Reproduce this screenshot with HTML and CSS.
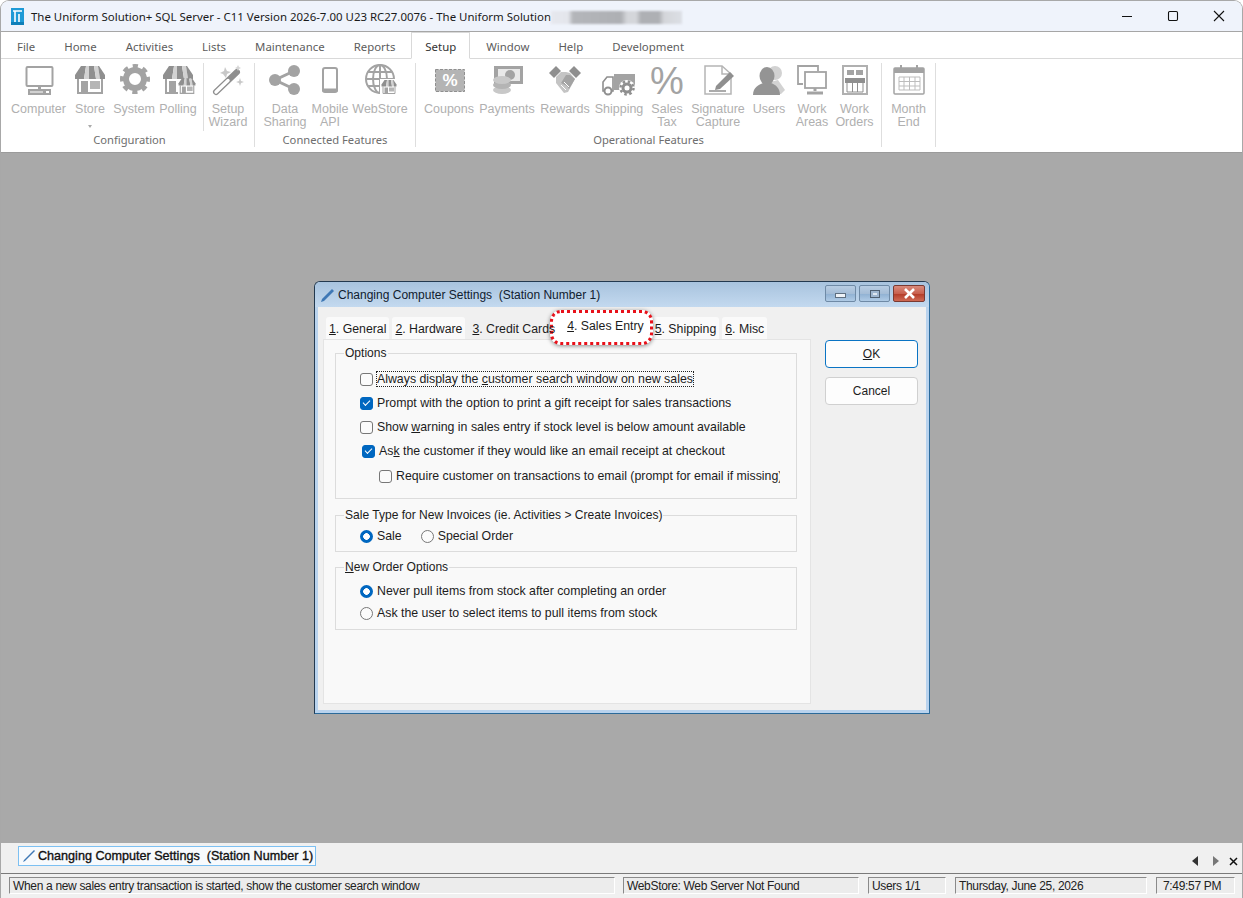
FILE: index.html
```html
<!DOCTYPE html>
<html lang="en">
<head>
    <meta charset="UTF-8">
    <title>The Uniform Solution+ SQL Server</title>
    <link rel="stylesheet" href="styles.css">
</head>
<body>
    <svg class="defs" width="0" height="0">
        <symbol id="store" viewBox="0 0 32 32">
            <path d="M4 15V29H28V15" fill="#fff" stroke="#a3a3a3" stroke-width="2"/>
            <rect x="7" y="17" width="7" height="12" fill="#a3a3a3"/>
            <rect x="16" y="17" width="10" height="8" fill="#b5b5b5"/>
            <path d="M7 2H12L10 15H1V11Z" fill="#8f8f8f"/>
            <path d="M12 2H15V15H10Z" fill="#d2d2d2"/>
            <path d="M15 2H20L22 15H15Z" fill="#8f8f8f"/>
            <path d="M20 2H24L26 15H22Z" fill="#d2d2d2"/>
            <path d="M24 2H25L31 11V15H26Z" fill="#8f8f8f"/>
        </symbol>
    </svg>

    <div class="app">
        <header class="titlebar">
            <svg class="logo" width="13" height="17" viewBox="0 0 13 17">
                <rect width="13" height="17" fill="#1e9ad6"/>
                <path d="M2 3H11M4 3V14M8 6V14" fill="none" stroke="#fff" stroke-width="1.6"/>
                <rect y="14" width="13" height="3" fill="#0f7fb8"/>
            </svg>
            <span class="title-text">The Uniform Solution+ SQL Server - C11 Version 2026-7.00 U23 RC27.0076 - The Uniform Solution</span>
            <span class="title-blur"></span>
            <div class="win-controls">
                <svg width="12" height="12" viewBox="0 0 12 12"><path d="M1 6.5H11" stroke="#111" stroke-width="1.1"/></svg>
                <svg width="12" height="12" viewBox="0 0 12 12"><rect x="1.5" y="1.5" width="9" height="9" rx="1.2" fill="none" stroke="#111" stroke-width="1.1"/></svg>
                <svg width="12" height="12" viewBox="0 0 12 12"><path d="M1 1L11 11M11 1L1 11" stroke="#111" stroke-width="1.1"/></svg>
            </div>
        </header>

        <nav class="menu">
            <span>File</span>
            <span>Home</span>
            <span>Activities</span>
            <span>Lists</span>
            <span>Maintenance</span>
            <span>Reports</span>
            <span class="menu-active">Setup</span>
            <span>Window</span>
            <span>Help</span>
            <span>Development</span>
        </nav>

        <section class="ribbon">
            <div class="group group-config">
                <div class="group-items">
                    <div class="tool">
                        <svg class="icon" viewBox="0 0 32 32">
                            <rect x="3.5" y="3" width="26" height="19" rx="1" fill="none" stroke="#a3a3a3" stroke-width="2"/>
                            <path d="M16.5 22V26" stroke="#a3a3a3" stroke-width="3"/>
                            <rect x="5" y="25" width="23" height="6" fill="#a3a3a3"/>
                            <path d="M7 28H20" stroke="#fff"/>
                            <rect x="23" y="27" width="3" height="2" fill="#fff"/>
                        </svg>
                        <span>Computer</span>
                    </div>
                    <div class="tool">
                        <svg class="icon" viewBox="0 0 32 32"><use href="#store"/></svg>
                        <span>Store</span>
                        <i class="caret"></i>
                    </div>
                    <div class="tool">
                        <svg class="icon" viewBox="0 0 32 32">
                            <circle cx="17" cy="15" r="9" fill="none" stroke="#a3a3a3" stroke-width="6"/>
                            <circle cx="17" cy="15" r="13" fill="none" stroke="#a3a3a3" stroke-width="4" stroke-dasharray="5.2 5" stroke-dashoffset="2.6"/>
                        </svg>
                        <span>System</span>
                    </div>
                    <div class="tool">
                        <svg class="icon" viewBox="0 0 32 32">
                            <use href="#store"/>
                            <rect x="16" y="15" width="17" height="17" fill="#fff"/>
                            <use href="#store" x="16" y="13" width="18" height="18"/>
                        </svg>
                        <span>Polling</span>
                    </div>
                    <div class="tool tool-split">
                        <svg class="icon" viewBox="0 0 32 32">
                            <path d="M4 28L25 8" stroke="#8f8f8f" stroke-width="6" stroke-linecap="round"/>
                            <path d="M4 28L16 16.5" stroke="#fff" stroke-width="3.4" stroke-linecap="round"/>
                            <path d="M13 3L15 7L19 8L15 10L14 14L11 10L8 9L12 7Z" fill="#c8c8c8"/>
                            <path d="M28 14L29 17L32 18L29 19L28 22L27 19L24 18L27 17Z" fill="#c8c8c8"/>
                            <path d="M26 1L27 3L29 4L27 5L26 7L25 5L23 4L25 3Z" fill="#d5d5d5"/>
                        </svg>
                        <span>Setup<br>Wizard</span>
                    </div>
                </div>
                <div class="group-name">Configuration</div>
            </div>

            <div class="group group-connected">
                <div class="group-items">
                    <div class="tool">
                        <svg class="icon" viewBox="0 0 32 32">
                            <path d="M25 7L6 16L25 25" fill="none" stroke="#a3a3a3" stroke-width="3"/>
                            <circle cx="25" cy="7" r="6" fill="#a3a3a3"/>
                            <circle cx="6" cy="16" r="6" fill="#a3a3a3"/>
                            <circle cx="25" cy="25" r="6" fill="#a3a3a3"/>
                        </svg>
                        <span>Data<br>Sharing</span>
                    </div>
                    <div class="tool">
                        <svg class="icon" viewBox="0 0 32 32">
                            <rect x="9" y="4" width="14" height="24" rx="2" fill="none" stroke="#a3a3a3" stroke-width="2"/>
                            <path d="M8 26H24" stroke="#a3a3a3" stroke-width="3"/>
                        </svg>
                        <span>Mobile<br>API</span>
                    </div>
                    <div class="tool">
                        <svg class="icon" viewBox="0 0 32 32" fill="none" stroke="#a3a3a3" stroke-width="2">
                            <circle cx="16" cy="15" r="14"/>
                            <ellipse cx="16" cy="15" rx="7" ry="14"/>
                            <path d="M2 15H30M4 8H28M4 22H28M16 1V29"/>
                            <rect x="16" y="15" width="17" height="17" fill="#fff" stroke="none"/>
                            <use href="#store" x="17" y="15" width="16" height="16" stroke="none"/>
                        </svg>
                        <span>WebStore</span>
                    </div>
                </div>
                <div class="group-name">Connected Features</div>
            </div>

            <div class="group group-operational">
                <div class="group-items">
                    <div class="tool">
                        <svg class="icon" viewBox="0 0 32 32">
                            <rect x="2.5" y="5.5" width="29" height="22" fill="#b4b4b4" stroke="#8f8f8f" stroke-dasharray="3 1.5"/>
                            <text x="17" y="22" class="icon-percent">%</text>
                        </svg>
                        <span>Coupons</span>
                    </div>
                    <div class="tool">
                        <svg class="icon" viewBox="0 0 32 32">
                            <rect x="3" y="2" width="29" height="18" fill="#a3a3a3"/>
                            <path d="M7 5H29V17H7Z" fill="#e8e8e8"/>
                            <circle cx="19" cy="11" r="5" fill="#a3a3a3"/>
                            <ellipse cx="11" cy="26" rx="9" ry="4" fill="#c8c8c8"/>
                            <ellipse cx="11" cy="21" rx="9" ry="4" fill="#b4b4b4"/>
                            <ellipse cx="11" cy="16" rx="9" ry="4" fill="#c8c8c8"/>
                        </svg>
                        <span>Payments</span>
                    </div>
                    <div class="tool">
                        <svg class="icon" viewBox="0 0 32 32">
                            <path d="M0 9L7 2L12 7L5 14Z" fill="#8f8f8f"/>
                            <path d="M32 9L25 2L20 7L27 14Z" fill="#8f8f8f"/>
                            <path d="M7 13L12 8H17L21 9L26 15L19 28L15 29L7 19Z" fill="#c4c4c4"/>
                            <path d="M12 19L17 11H21L26 15L20 25L18 22" fill="#a3a3a3"/>
                            <path d="M12 21L17 26M15 18L20 23" stroke="#fff"/>
                        </svg>
                        <span>Rewards</span>
                    </div>
                    <div class="tool">
                        <svg class="icon" viewBox="0 0 32 32">
                            <rect x="11" y="10" width="21" height="16" fill="#a3a3a3"/>
                            <path d="M0 27V18L4 13H10V27Z" fill="#fff" stroke="#8f8f8f" stroke-width="1.6"/>
                            <circle cx="5" cy="27" r="3.5" fill="#fff" stroke="#8f8f8f" stroke-width="2"/>
                            <circle cx="24" cy="24" r="8" fill="#fff"/>
                            <circle cx="24" cy="24" r="4" fill="#fff" stroke="#8f8f8f" stroke-width="3"/>
                            <circle cx="24" cy="24" r="6.5" fill="none" stroke="#8f8f8f" stroke-width="2.4" stroke-dasharray="2.5 2.6"/>
                        </svg>
                        <span>Shipping</span>
                    </div>
                    <div class="tool">
                        <svg class="icon" viewBox="0 0 32 32">
                            <text x="16" y="30" class="icon-tax">%</text>
                        </svg>
                        <span>Sales<br>Tax</span>
                    </div>
                    <div class="tool">
                        <svg class="icon" viewBox="0 0 32 32">
                            <path d="M3 2H20L29 10V30H3Z" fill="none" stroke="#b5b5b5" stroke-width="1.5"/>
                            <path d="M20 2V10H29" fill="none" stroke="#b5b5b5" stroke-width="1.5"/>
                            <path d="M14 22L28 8L32 12L18 25L13 26Z" fill="#8f8f8f"/>
                            <path d="M7 27H24" stroke="#8f8f8f" stroke-width="1.3"/>
                        </svg>
                        <span>Signature<br>Capture</span>
                    </div>
                    <div class="tool">
                        <svg class="icon" viewBox="0 0 32 32">
                            <circle cx="22" cy="9" r="7" fill="#d2d2d2"/>
                            <path d="M17 18L25 16L32 26L28 30H20Z" fill="#d2d2d2"/>
                            <ellipse cx="14" cy="12" rx="7.5" ry="9" fill="#949494"/>
                            <path d="M0 31C0 23 6 21 10 19H18C23 21 27 24 27 31Z" fill="#949494"/>
                        </svg>
                        <span>Users</span>
                    </div>
                    <div class="tool">
                        <svg class="icon" viewBox="0 0 32 32" fill="none" stroke="#a3a3a3" stroke-width="1.8">
                            <path d="M7 20H2V2H22V7"/>
                            <rect x="9" y="8" width="21" height="16" fill="#fff"/>
                            <path d="M19 24V27" stroke-width="3"/>
                            <path d="M11 29H27" stroke-width="3"/>
                        </svg>
                        <span>Work<br>Areas</span>
                    </div>
                    <div class="tool">
                        <svg class="icon" viewBox="0 0 32 32">
                            <rect x="4" y="2" width="24" height="28" fill="none" stroke="#b0b0b0" stroke-width="2"/>
                            <rect x="8" y="6" width="7" height="5" fill="#a3a3a3"/>
                            <rect x="17" y="6" width="7" height="5" fill="#a3a3a3"/>
                            <rect x="6" y="14" width="20" height="5" fill="#8f8f8f"/>
                            <path d="M8 19V28H24V19M13.5 19V28M18.5 19V28" fill="none" stroke="#8f8f8f"/>
                        </svg>
                        <span>Work<br>Orders</span>
                    </div>
                </div>
                <div class="group-name">Operational Features</div>
            </div>

            <div class="group group-month">
                <div class="group-items">
                    <div class="tool">
                        <svg class="icon" viewBox="0 0 32 32">
                            <rect x="1" y="4" width="30" height="26" rx="1" fill="none" stroke="#a3a3a3" stroke-width="1.5"/>
                            <rect x="1" y="4" width="30" height="5" fill="#a3a3a3"/>
                            <path d="M8 1V6M24 1V6" stroke="#a3a3a3" stroke-width="2"/>
                            <path d="M6 13H27V26H6ZM6 17.5H27M6 22H27M11 13V26M16.5 13V26M22 13V26" fill="none" stroke="#bdbdbd"/>
                        </svg>
                        <span>Month<br>End</span>
                    </div>
                </div>
            </div>
        </section>

        <main class="desktop">
            <div class="dialog">
                <div class="dialog-title">
                    <svg width="15" height="15" viewBox="0 0 15 15">
                        <path d="M1 14L2 11L12 1L14 3L4 13Z" fill="#3f78b5"/>
                    </svg>
                    <span>Changing Computer Settings&nbsp; (Station Number 1)</span>
                    <div class="dialog-controls">
                        <button class="cap-btn"><i class="cap-min"></i></button>
                        <button class="cap-btn"><i class="cap-max"></i></button>
                        <button class="cap-btn cap-close">
                            <svg width="13" height="11" viewBox="0 0 13 11"><path d="M2 1L11 10M11 1L2 10" stroke="#fff" stroke-width="2.6"/></svg>
                        </button>
                    </div>
                </div>

                <div class="dialog-body">
                    <div class="dialog-main">
                        <div class="tabs">
                            <div class="tab"><u>1</u>. General</div>
                            <div class="tab"><u>2</u>. Hardware</div>
                            <div class="tab tab-over"><u>3</u>. Credit Cards</div>
                            <div class="tab tab-current"><u>4</u>. Sales Entry</div>
                            <div class="tab tab-five"><u>5</u>. Shipping</div>
                            <div class="tab"><u>6</u>. Misc</div>
                        </div>

                        <div class="tab-page">
                            <fieldset class="box box-options">
                                <legend>Options</legend>
                                <label class="opt"><input type="checkbox"><span class="focused">Always display the <u>c</u>ustomer search window on new sales</span></label>
                                <label class="opt"><input type="checkbox" checked><span>Prompt with the option to print a gift receipt for sales transactions</span></label>
                                <label class="opt"><input type="checkbox"><span>Show <u>w</u>arning in sales entry if stock level is below amount available</span></label>
                                <label class="opt opt-shift"><input type="checkbox" checked><span>As<u>k</u> the customer if they would like an email receipt at checkout</span></label>
                                <label class="opt opt-sub"><input type="checkbox"><span class="cut">Require customer on transactions to email (prompt for email if missing)</span></label>
                            </fieldset>

                            <fieldset class="box box-sale">
                                <legend>Sale Type for New Invoices (ie. Activities &gt; Create Invoices)</legend>
                                <div class="radio-line">
                                    <label class="opt"><input type="radio" name="sale" checked><span>Sale</span></label>
                                    <label class="opt"><input type="radio" name="sale"><span>Special Order</span></label>
                                </div>
                            </fieldset>

                            <fieldset class="box box-order">
                                <legend><u>N</u>ew Order Options</legend>
                                <label class="opt opt-tight"><input type="radio" name="order" checked><span>Never pull items from stock after completing an order</span></label>
                                <label class="opt opt-tight"><input type="radio" name="order"><span>Ask the user to select items to pull items from stock</span></label>
                            </fieldset>
                        </div>
                    </div>

                    <div class="dialog-actions">
                        <button class="btn btn-default"><u>O</u>K</button>
                        <button class="btn">Cancel</button>
                    </div>
                </div>
            </div>
        </main>

        <div class="taskbar">
            <div class="task">
                <svg width="14" height="14" viewBox="0 0 14 14"><path d="M1 13L2 11L12 1L13 2L3 12Z" fill="#3f78b5"/></svg>
                <span>Changing Computer Settings&nbsp; (Station Number 1)</span>
            </div>
            <div class="task-nav">
                <svg width="8" height="10" viewBox="0 0 8 10"><path d="M7 0V10L1 5Z" fill="#333"/></svg>
                <svg width="8" height="10" viewBox="0 0 8 10"><path d="M1 0V10L7 5Z" fill="#777"/></svg>
                <svg class="task-close" width="9" height="9" viewBox="0 0 9 9"><path d="M1 1L8 8M8 1L1 8" stroke="#111" stroke-width="1.5"/></svg>
            </div>
        </div>

        <footer class="statusbar">
            <div class="pane pane-hint">When a new sales entry transaction is started, show the customer search window</div>
            <div class="pane pane-web">WebStore: Web Server Not Found</div>
            <div class="pane pane-users">Users 1/1</div>
            <div class="pane pane-date">Thursday, June 25, 2026</div>
            <div class="pane pane-time">7:49:57 PM</div>
        </footer>
    </div>
</body>
</html>
```

FILE: styles.css
```css
* {
    margin: 0;
    padding: 0;
    box-sizing: border-box;
}

body {
    font-family: 'Liberation Sans', sans-serif;
    font-size: 12px;
    background: #fff;
    overflow: hidden;
}

.defs {
    position: absolute;
}

.app {
    width: 1243px;
    height: 898px;
    display: flex;
    flex-direction: column;
    border: 1px solid #a8a8a8;
    border-bottom: none;
    border-radius: 9px 9px 0 0;
    overflow: hidden;
}

/* title bar */
.titlebar {
    height: 31px;
    flex: none;
    display: flex;
    align-items: center;
    background: #eff3fb;
    border-bottom: 1px solid #a6a6a6;
    padding-left: 10px;
    font-family: 'Noto Sans', sans-serif;
    font-size: 11.45px;
    color: #1a1a1a;
}

.logo {
    margin-right: 7px;
}

.title-text {
    white-space: nowrap;
}

.title-blur {
    width: 131px;
    height: 13px;
    margin-top: 2px;
    background: linear-gradient(90deg, #e6e8ee 0, #e4e6ec 17px, #b4b6ba 22px, #aeb0b4 70px, #d4d6da 76px, #d4d6da 85px, #aeb0b4 90px, #aeb0b4 108px, #d4d6da 113px, #dcdfe5 131px);
    filter: blur(1px);
}

.win-controls {
    margin-left: auto;
    display: flex;
    gap: 34px;
    padding-right: 17px;
}

/* menu tabs */
.menu {
    height: 27px;
    flex: none;
    display: flex;
    align-items: center;
    gap: 29px;
    padding: 2px 0 0 16px;
    border-bottom: 1px solid #d9d9d9;
    font-family: 'Noto Sans', sans-serif;
    font-size: 11.4px;
    color: #5c5c5c;
}

.menu-active {
    height: 27px;
    margin: -1px -13px 0 -13px;
    padding: 0 13px;
    line-height: 27px;
    background: #fff;
    border: 1px solid #d9d9d9;
    border-bottom-color: #fff;
    color: #333;
}

/* ribbon */
.ribbon {
    height: 94px;
    flex: none;
    display: flex;
    border-bottom: 1px solid #9b9b9b;
    padding-top: 4px;
}

.group {
    display: flex;
    flex-direction: column;
    border-right: 1px solid #dedede;
    margin-bottom: 5px;
}

.group-items {
    display: grid;
    height: 71px;
}

.group-config {
    width: 254px;
    padding-left: 4px;
}

.group-config .group-items {
    grid-template-columns: 67px 36px 52px 36px 58px;
}

.group-connected {
    width: 161px;
}

.group-connected .group-items {
    grid-template-columns: 60px 30px 70px;
}

.group-operational {
    width: 466px;
}

.group-operational .group-items {
    grid-template-columns: 66px 50px 66px 42px 54px 48px 54px 32px 53px;
}

.group-month {
    width: 54px;
}

.group-month .group-items {
    grid-template-columns: 53px;
}

.group-name {
    text-align: center;
    font-family: 'Noto Sans', sans-serif;
    font-size: 11.2px;
    color: #6e6e6e;
    line-height: 14px;
    margin-top: 2px;
    white-space: nowrap;
}

.tool {
    display: flex;
    flex-direction: column;
    align-items: center;
    text-align: center;
    font-size: 12.5px;
    color: #b0b0b0;
    line-height: 13px;
    white-space: nowrap;
    padding-top: 1px;
    position: relative;
}

.tool-split {
    margin-left: 7px;
    padding-right: 2px;
    border-left: 1px solid #dedede;
}

.icon {
    width: 32px;
    height: 32px;
    margin-bottom: 7px;
    overflow: visible;
    flex: none;
}

.icon-percent {
    font: bold 17px 'Liberation Sans', sans-serif;
    fill: #fff;
    text-anchor: middle;
}

.icon-tax {
    font: 38px 'Liberation Sans', sans-serif;
    fill: #a3a3a3;
    text-anchor: middle;
}

.caret {
    position: absolute;
    top: 62px;
    width: 0;
    height: 0;
    border: 2.5px solid transparent;
    border-top: 3px solid #ababab;
}

/* desktop and dialog */
.desktop {
    flex: 1;
    position: relative;
    background: #a9a9a9;
}

.dialog {
    position: absolute;
    left: 313px;
    top: 128px;
    width: 616px;
    height: 433px;
    display: flex;
    flex-direction: column;
    background: #b9d3ee;
    border: 1px solid #23394f;
    border-right-color: #2b6a9a;
    border-bottom-color: #2b6a9a;
    border-radius: 6px 6px 0 0;
    overflow: hidden;
}

.dialog-title {
    height: 25px;
    flex: none;
    display: flex;
    align-items: center;
    gap: 3px;
    padding: 1px 0 0 5px;
    background: linear-gradient(#a8c3de, #c3d9ef);
    color: #10202f;
}

.dialog-controls {
    margin-left: auto;
    display: flex;
    gap: 3px;
    padding-right: 4px;
    margin-top: -3px;
}

.cap-btn {
    width: 31px;
    height: 17px;
    display: flex;
    align-items: center;
    justify-content: center;
    border: 1px solid #6f8aa6;
    border-radius: 2px;
    background: linear-gradient(#b8cde3 0, #a5bdd7 50%, #8fb0d2 51%, #b0cbe6 100%);
}

.cap-close {
    width: 32px;
    border-color: #7a3a32;
    background: linear-gradient(#d98a7c 0, #c8604e 50%, #b23a26 51%, #cf6a55 100%);
}

.cap-min {
    width: 11px;
    height: 5px;
    margin-top: 3px;
    background: #eef2f7;
    border: 1px solid #5f6f80;
}

.cap-max {
    width: 10px;
    height: 8px;
    border: 1px solid #4f5f70;
    background: #dfe7f0;
    box-shadow: inset 0 0 0 2px #9fb6cf;
}

.dialog-body {
    flex: 1;
    margin: 0 3px 3px;
    display: flex;
    background: #f0f0f0;
}

.dialog-main {
    width: 493px;
    padding: 10px 0 6px 5px;
    display: flex;
    flex-direction: column;
}

/* tabs */
.tabs {
    display: flex;
    height: 22px;
    padding-left: 3px;
    gap: 3px;
    flex: none;
    font-size: 12.3px;
    color: #1c1c1c;
}

.tab {
    padding: 0 3px;
    line-height: 24px;
    background: #fafafa;
    border-radius: 3px 3px 0 0;
    white-space: nowrap;
}

.tab-over {
    position: relative;
    z-index: 2;
    background: none;
    margin-left: 1px;
}

.tab-current {
    position: relative;
    z-index: 1;
    margin-left: -8px;
    padding: 0 6px 0 14px;
    line-height: 19px;
}

.tab-five {
    margin-left: -1px;
}

.tab-current::before {
    content: '';
    position: absolute;
    z-index: -1;
    left: -3px;
    top: -7px;
    right: -3px;
    bottom: -6px;
    background: #fff;
    border: 3px dotted #e8111a;
    border-radius: 11px;
    box-shadow: 0 1px 4px rgba(0, 0, 0, 0.45);
}

.tab-page {
    flex: 1;
    background: #f9f9f9;
    border: 1px solid #e4e4e4;
    padding: 6px 13px 0 11px;
    font-size: 12.33px;
    color: #1c1c1c;
}

.box {
    border: 1px solid #dcdcdc;
    padding: 0 0 0 24px;
    min-width: 0;
}

.box legend {
    margin-left: -16px;
    padding: 0 1px;
    font-size: 12.05px;
    line-height: 14px;
}

.box-options {
    padding-top: 7px;
    padding-bottom: 10px;
}

.box-sale {
    margin-top: 9px;
    padding-top: 2px;
    padding-bottom: 3px;
}

.box-order {
    margin-top: 8px;
    padding-top: 6px;
    padding-bottom: 5px;
}

.opt {
    height: 24px;
    display: flex;
    align-items: center;
    gap: 4px;
    white-space: nowrap;
}

.opt-shift {
    margin-left: 2px;
}

.opt-sub {
    margin: 1px 0 0 19px;
}

.opt-tight {
    height: 22px;
}

.focused {
    outline: 1px dotted #222;
}

.cut {
    width: 384px;
    overflow: hidden;
}

.radio-line {
    display: flex;
    gap: 19px;
}

.opt input {
    appearance: none;
    width: 13px;
    height: 13px;
    flex: none;
    background: #fbfbfb;
    border: 1px solid #777;
}

.opt input[type='checkbox'] {
    border-radius: 3px;
}

.opt input[type='checkbox']:checked {
    border-color: #0067c0;
    background: #0067c0;
    position: relative;
}

.opt input[type='checkbox']:checked::after {
    content: '';
    position: absolute;
    left: 2px;
    top: 2px;
    width: 6px;
    height: 3px;
    border-left: 1.2px solid #fff;
    border-bottom: 1.2px solid #fff;
    transform: rotate(-45deg);
}

.opt input[type='radio'] {
    border-radius: 50%;
}

.opt input[type='radio']:checked {
    border: none;
    background: radial-gradient(circle, #fff 0, #fff 3px, #0067c0 3.6px);
}

/* ok / cancel */
.dialog-actions {
    display: flex;
    flex-direction: column;
    gap: 9px;
    padding: 33px 0 0 14px;
}

.btn {
    width: 93px;
    height: 28px;
    font: 12px 'Liberation Sans', sans-serif;
    color: #1c1c1c;
    background: #fdfdfd;
    border: 1px solid #d0d0d0;
    border-radius: 4px;
}

.btn-default {
    border-color: #0a74c4;
}

/* task strip */
.taskbar {
    height: 31px;
    flex: none;
    display: flex;
    align-items: flex-start;
    justify-content: space-between;
    padding: 3px 4px 0 17px;
    background: #f0f0f0;
    border-bottom: 1px solid #7a7a7a;
}

.task {
    width: 298px;
    height: 20px;
    display: flex;
    align-items: center;
    gap: 2px;
    padding-left: 3px;
    background: #f7fafd;
    border: 1px solid #7cc0f2;
    font-size: 12.6px;
    color: #111;
    white-space: nowrap;
    -webkit-text-stroke: 0.35px #111;
}

.task-nav {
    display: flex;
    align-items: center;
    gap: 13px;
    margin-top: 10px;
}

.task-close {
    margin-left: -4px;
}

/* status panes */
.statusbar {
    height: 24px;
    flex: none;
    display: flex;
    padding: 3px 0 0 8px;
    background: #f0f0f0;
    color: #222;
    letter-spacing: -0.33px;
}

.pane {
    height: 17px;
    line-height: 16px;
    padding-left: 3px;
    background: #ececec;
    border: 1px solid #c8c8c8;
    border-left-color: #8a8a8a;
    border-top-color: #8a8a8a;
    border-right-color: #fff;
    border-bottom-color: #fff;
    white-space: nowrap;
}

.pane-hint {
    width: 606px;
}

.pane-web {
    width: 236px;
    margin-left: 8px;
}

.pane-users {
    width: 78px;
    margin-left: 9px;
}

.pane-date {
    width: 192px;
    margin-left: 9px;
}

.pane-time {
    width: 79px;
    margin-left: 9px;
    padding-left: 6px;
}
```
